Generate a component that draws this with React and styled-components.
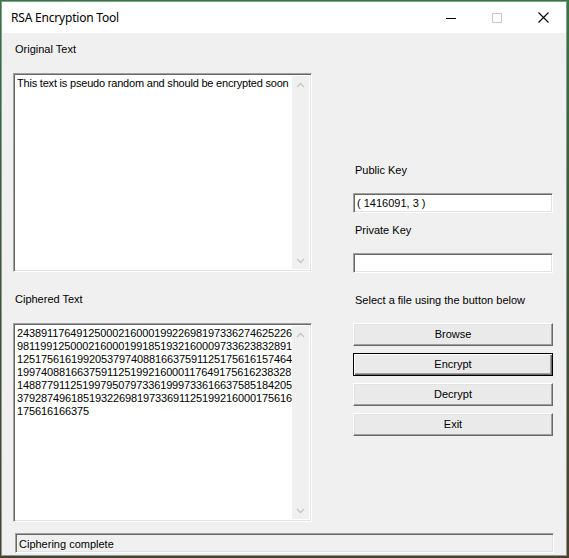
import React from "react";
import styled, { createGlobalStyle } from "styled-components";

const GlobalStyle = createGlobalStyle`
  html, body {
    margin: 0;
    padding: 0;
    height: 100%;
  }
  body {
    background: linear-gradient(180deg, #2f7a3c 0%, #3d5a34 40%, #4a4030 100%);
    font-family: "Liberation Sans", Arial, sans-serif;
  }
`;

const Window = styled.div`
  margin: 1px 0 0 1px;
  width: 564px;
  height: 553px;
  border: 1px solid #8c9a95;
  background: #f0f0f0;
  display: flex;
  flex-direction: column;
`;

const TitleBar = styled.div`
  height: 31px;
  background: #fff;
  display: flex;
  align-items: center;
`;

const Title = styled.div`
  flex: 1;
  padding-left: 9px;
  font-family: "Noto Sans", "Open Sans", sans-serif;
  font-size: 12px;
  color: #000;
  letter-spacing: -0.2px;
`;

const CaptionButton = styled.div`
  width: 46px;
  height: 31px;
  display: flex;
  align-items: center;
  justify-content: center;
`;

const Client = styled.div`
  flex: 1;
  display: flex;
  flex-direction: column;
  padding: 10px 13px 2px 11px;
`;

const Main = styled.div`
  display: grid;
  grid-template-columns: 299px 200px;
  column-gap: 41px;
`;

const Column = styled.div`
  display: flex;
  flex-direction: column;
  padding-top: ${(p) => p.$top || 0}px;
`;

const Label = styled.div`
  font-size: 11px;
  line-height: 13px;
  height: 13px;
  padding-left: 2px;
  color: #000;
  margin-top: ${(p) => p.$mt || 0}px;
  margin-bottom: ${(p) => p.$mb || 0}px;
`;

const sunken = `
  box-sizing: border-box;
  border: 1px solid;
  border-color: #a0a0a0 #ffffff #ffffff #a0a0a0;
  box-shadow: inset 1px 1px 0 #696969, inset -1px -1px 0 #e3e3e3;
`;

const TextArea = styled.div`
  ${sunken}
  height: 199px;
  background: #fff;
  display: flex;
  margin-bottom: ${(p) => p.$mb || 0}px;
`;

const AreaText = styled.div`
  flex: 1;
  padding: 3px 0 0 3px;
  font-size: 11px;
  line-height: 13px;
  color: #000;
  white-space: pre;
  letter-spacing: ${(p) => (p.$digits ? "-0.12px" : "-0.2px")};
`;

const ScrollBar = styled.div`
  width: 17px;
  margin: 2px 2px 2px 0;
  background: #f0f0f0;
  display: flex;
  flex-direction: column;
  justify-content: space-between;
  align-items: center;
`;

const Arrow = styled.div`
  height: 17px;
  display: flex;
  align-items: center;
  justify-content: center;
`;

const Field = styled.div`
  ${sunken}
  height: 20px;
  background: #fff;
  font-size: 11px;
  line-height: 16px;
  padding: 1px 3px;
  color: #000;
  margin-bottom: ${(p) => p.$mb || 0}px;
`;

const Buttons = styled.div`
  display: flex;
  flex-direction: column;
  gap: 7px;
`;

const Button = styled.button`
  box-sizing: border-box;
  height: 23px;
  width: 100%;
  padding: 0 0 1px;
  font-family: "Liberation Sans", Arial, sans-serif;
  font-size: 11px;
  color: #000;
  background: #eaeaea;
  border: 1px solid;
  border-color: ${(p) => (p.$default ? "#000" : "#ffffff #696969 #696969 #ffffff")};
  box-shadow: ${(p) =>
    p.$default
      ? "inset 1px 1px 0 #fff, inset -1px -1px 0 #696969, inset -2px -2px 0 #a0a0a0"
      : "inset -1px -1px 0 #a0a0a0, inset 1px 1px 0 #e3e3e3"};
`;

const StatusBox = styled.div`
  ${sunken}
  margin-top: 11px;
  margin-left: 2px;
  width: 539px;
  height: 20px;
  background: #f0f0f0;
  font-size: 11px;
  line-height: 16px;
  padding: 2px 3px;
  color: #000;
`;

const Up = () => (
  <svg width="9" height="6" viewBox="0 0 9 6">
    <path d="M1 5 L4.5 1.5 L8 5" stroke="#c4c4c4" strokeWidth="1.3" fill="none" />
  </svg>
);

const Down = () => (
  <svg width="9" height="6" viewBox="0 0 9 6">
    <path d="M1 1 L4.5 4.5 L8 1" stroke="#c4c4c4" strokeWidth="1.3" fill="none" />
  </svg>
);

const Scroll = () => (
  <ScrollBar>
    <Arrow><Up /></Arrow>
    <Arrow><Down /></Arrow>
  </ScrollBar>
);

const cipherLines = [
  "2438911764912500021600019922698197336274625226",
  "9811991250002160001991851932160009733623832891",
  "1251756161992053797408816637591125175616157464",
  "1997408816637591125199216000117649175616238328",
  "1488779112519979507973361999733616637585184205",
  "3792874961851932269819733691125199216000175616",
  "175616166375",
];

const App = () => {
  return (
    <>
      <GlobalStyle />
      <Window>
        <TitleBar>
          <Title>RSA Encryption Tool</Title>
          <CaptionButton>
            <svg width="10" height="10" viewBox="0 0 10 10">
              <path d="M0 5.5 H10" stroke="#000" strokeWidth="1" />
            </svg>
          </CaptionButton>
          <CaptionButton>
            <svg width="10" height="10" viewBox="0 0 10 10">
              <rect x="0.5" y="0.5" width="9" height="9" stroke="#c8c8c8" fill="none" />
            </svg>
          </CaptionButton>
          <CaptionButton>
            <svg width="11" height="11" viewBox="0 0 11 11">
              <path d="M0.5 0.5 L10.5 10.5 M10.5 0.5 L0.5 10.5" stroke="#000" strokeWidth="1.1" />
            </svg>
          </CaptionButton>
        </TitleBar>
        <Client>
          <Main>
            <Column>
              <Label $mb={17}>Original Text</Label>
              <TextArea $mb={21}>
                <AreaText>This text is pseudo random and should be encrypted soon</AreaText>
                <Scroll />
              </TextArea>
              <Label $mb={17}>Ciphered Text</Label>
              <TextArea>
                <AreaText $digits>{cipherLines.join("\n")}</AreaText>
                <Scroll />
              </TextArea>
            </Column>
            <Column $top={121}>
              <Label $mb={16}>Public Key</Label>
              <Field $mb={11}>( 1416091, 3 )</Field>
              <Label $mb={16}>Private Key</Label>
              <Field $mb={21}></Field>
              <Label $mb={16}>Select a file using the button below</Label>
              <Buttons>
                <Button>Browse</Button>
                <Button $default>Encrypt</Button>
                <Button>Decrypt</Button>
                <Button>Exit</Button>
              </Buttons>
            </Column>
          </Main>
          <StatusBox>Ciphering complete</StatusBox>
        </Client>
      </Window>
    </>
  );
};

export default App;
